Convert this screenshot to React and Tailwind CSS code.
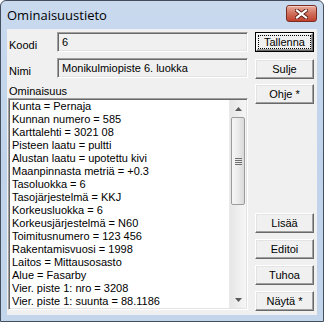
import React from 'react'

const font = { fontFamily: '"Liberation Sans", Arial, sans-serif' }

const items = [
  'Kunta = Pernaja',
  'Kunnan numero = 585',
  'Karttalehti = 3021 08',
  'Pisteen laatu = pultti',
  'Alustan laatu = upotettu kivi',
  'Maanpinnasta metriä = +0.3',
  'Tasoluokka = 6',
  'Tasojärjestelmä = KKJ',
  'Korkeusluokka = 6',
  'Korkeusjärjestelmä = N60',
  'Toimitusnumero = 123 456',
  'Rakentamisvuosi = 1998',
  'Laitos = Mittausosasto',
  'Alue = Fasarby',
  'Vier. piste 1: nro = 3208',
  'Vier. piste 1: suunta = 88.1186',
]

function Button({ children, className = '' }) {
  return (
    <div
      className={`h-[20px] w-[59px] flex items-center justify-center bg-[#f0f0f0] border border-t-white border-l-white border-r-[#696969] border-b-[#696969] shadow-[inset_-1px_-1px_0_#a0a0a0,inset_1px_1px_0_#e3e3e3] text-[11px] text-black ${className}`}
    >
      {children}
    </div>
  )
}

function DefaultButton({ children }) {
  return (
    <div className="h-[20px] w-[59px] flex border border-black">
      <div className="flex-1 flex p-[1px] bg-[#f0f0f0] border border-t-white border-l-white border-r-[#696969] border-b-[#696969] shadow-[inset_-1px_-1px_0_#a0a0a0]">
        <div className="flex-1 flex items-center justify-center border border-dotted border-black text-[11px] leading-none">
          {children}
        </div>
      </div>
    </div>
  )
}

function Field({ label, value, className = '' }) {
  return (
    <div className={`flex h-[20px] ${className}`}>
      <div className="w-[49px] pl-[1px] pt-[6px] text-[11px] leading-[14px]">{label}</div>
      <div className="w-[191px] flex items-center pl-[4px] bg-[#f0f0f0] border border-t-[#a0a0a0] border-l-[#a0a0a0] border-r-white border-b-white shadow-[inset_1px_1px_0_#696969,inset_-1px_-1px_0_#e3e3e3] text-[11px]">
        {value}
      </div>
    </div>
  )
}

function Arrow({ up }) {
  return (
    <div className="h-[17px] flex items-center justify-center">
      <svg width="7" height="4" viewBox="0 0 7 4">
        {up ? (
          <path d="M3.5 0 L7 4 L0 4 Z" fill="#5a5a5a" />
        ) : (
          <path d="M0 0 L7 0 L3.5 4 Z" fill="#5a5a5a" />
        )}
      </svg>
    </div>
  )
}

function Scrollbar() {
  return (
    <div className="w-[17px] flex flex-col bg-gradient-to-r from-[#e6e6e6] to-[#f6f6f6] border-l border-[#eaeaea]">
      <Arrow up />
      <div className="flex-1 flex flex-col">
        <div className="h-[88px] mx-[1px] flex items-center justify-center rounded-[2px] border border-[#9c9c9c] bg-gradient-to-r from-[#f6f6f6] via-[#ebebeb] to-[#d9d9d9]">
          <div className="flex flex-col gap-[1px]">
            <div className="w-[7px] h-[1px] bg-[#6f6f6f]" />
            <div className="w-[7px] h-[1px] bg-[#6f6f6f]" />
            <div className="w-[7px] h-[1px] bg-[#6f6f6f]" />
            <div className="w-[7px] h-[1px] bg-[#6f6f6f]" />
          </div>
        </div>
      </div>
      <Arrow />
    </div>
  )
}

function CloseButton() {
  return (
    <div className="w-[31px] h-[17px] flex items-center justify-center rounded-[3px] border border-[#7a2d22] bg-gradient-to-b from-[#e8ab9c] via-[#d06f5c] to-[#c0402c] shadow-[inset_0_1px_0_#f3cdc4]">
      <svg width="13" height="10" viewBox="0 0 13 10">
        <path d="M2 1.5 L11 8.5 M11 1.5 L2 8.5" stroke="#5a1e16" strokeWidth="4" strokeLinecap="square" />
        <path d="M2 1.5 L11 8.5 M11 1.5 L2 8.5" stroke="#ffffff" strokeWidth="2.2" strokeLinecap="square" />
      </svg>
    </div>
  )
}

export default function App() {
  return (
    <div className="w-[324px] h-[322px] bg-white text-black" style={font}>
      <div className="w-full h-full flex flex-col border border-[#434f5f] rounded-t-[6px] bg-gradient-to-b from-[#c9daef] via-[#c0d3ea] to-[#c3d5eb] px-[6px] pb-[6px]">
        {/* Title bar */}
        <div className="h-[28px] flex items-start justify-between">
          <div
            className="pt-[5px] text-[13px] leading-[18px] text-black"
            style={{ fontFamily: '"Segoe UI", "Open Sans", sans-serif' }}
          >
            Ominaisuustieto
          </div>
          <div className="pt-[4px]">
            <CloseButton />
          </div>
        </div>

        {/* Client */}
        <div className="flex-1 flex bg-[#f0f0f0]">
          <div className="ml-[1px] w-[240px] flex flex-col pt-[3px] pb-[5px]">
            <Field label="Koodi" value="6" />
            <Field label="Nimi" value="Monikulmiopiste 6. luokka" className="mt-[6px]" />
            <div className="mt-[6px] pl-[1px] text-[11px] leading-[14px]">Ominaisuus</div>
            <div className="flex-1 flex bg-white border border-t-[#a0a0a0] border-l-[#a0a0a0] border-r-white border-b-white shadow-[inset_1px_1px_0_#696969,inset_-1px_-1px_0_#e3e3e3] p-[1px]">
              <div className="flex-1 pl-[2px] overflow-hidden">
                {items.map((t) => (
                  <div key={t} className="h-[13px] text-[11px] leading-[13px] whitespace-nowrap">
                    {t}
                  </div>
                ))}
              </div>
              <Scrollbar />
            </div>
          </div>

          <div className="ml-[7px] w-[59px] flex flex-col pt-[3px] pb-[4px]">
            <DefaultButton>Tallenna</DefaultButton>
            <Button className="mt-[7px]">Sulje</Button>
            <Button className="mt-[5px]">Ohje *</Button>
            <div className="flex-1" />
            <div className="flex flex-col gap-[6px]">
              <Button>Lisää</Button>
              <Button>Editoi</Button>
              <Button>Tuhoa</Button>
              <Button>Näytä *</Button>
            </div>
          </div>
        </div>
      </div>
    </div>
  )
}
